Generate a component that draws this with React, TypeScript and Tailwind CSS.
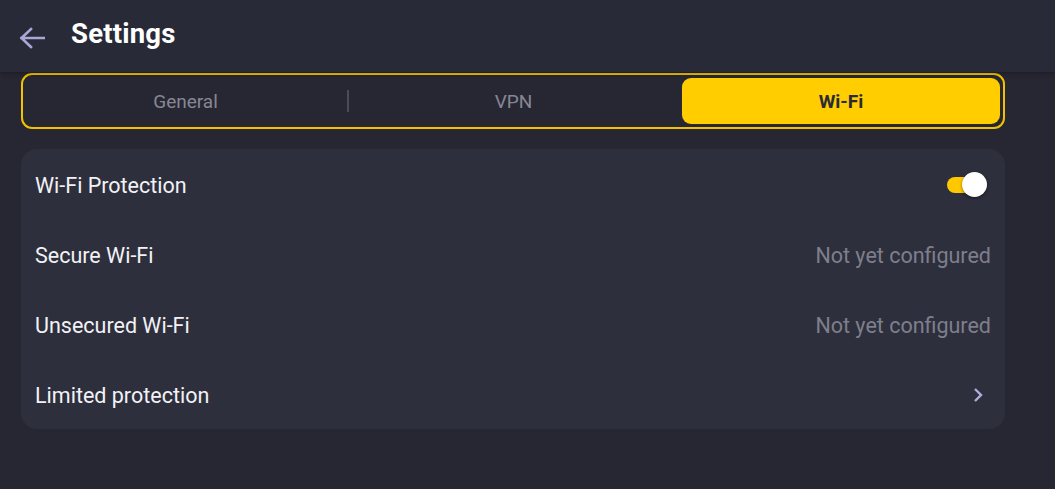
import React from "react";

export default function App() {
  const rows = [
    { label: "Wi-Fi Protection", kind: "toggle" },
    { label: "Secure Wi-Fi", kind: "text" },
    { label: "Unsecured Wi-Fi", kind: "text" },
    { label: "Limited protection", kind: "chevron" },
  ];
  return (
    <div
      className="w-[1055px] h-[489px] bg-[#262733] flex flex-col overflow-hidden"
      style={{ fontFamily: "Roboto, 'Noto Sans', sans-serif" }}
    >
      <div className="h-[72px] shrink-0 bg-[#292a37] flex items-center pl-[19px] shadow-[0_2px_4px_rgba(0,0,0,0.25)] relative z-10">
        <svg width="26" height="22" viewBox="0 0 26 22" fill="none" className="mt-[3px]">
          <path d="M12 2 L2.5 11 L12 20 M2.5 11 H25" stroke="#a9a7d6" strokeWidth="2.6" strokeLinecap="square" strokeLinejoin="miter" />
        </svg>
        <span className="ml-[26px] text-white text-[27.5px] font-bold tracking-[0.2px] -mt-[4px]">Settings</span>
      </div>
      <div className="px-[21px] pr-[50px] mt-[1px]">
        <div className="h-[56px] border-2 border-[#f2c200] rounded-[11px] flex items-stretch py-[3px] pr-[3px] pl-[1px]">
          <div className="w-[323px] flex items-center justify-center pt-[3px] text-[#868794] text-[19px]">General</div>
          <div className="w-[2px] bg-[#4a4b58] my-[12px]" />
          <div className="flex-1 flex items-center justify-center pt-[3px] text-[#868794] text-[19px]">VPN</div>
          <div className="ml-[4px] w-[318px] flex items-center justify-center pt-[3px] bg-[#ffcd00] rounded-[9px] text-[#2a2b36] text-[19px] font-bold shadow-[0_0_0_1px_#2a2b36]">
            Wi-Fi
          </div>
        </div>
        <div className="mt-[20px] bg-[#2e2f3c] rounded-[16px]">
          {rows.map((r) => (
            <div key={r.label} className="h-[70px] flex items-center pt-[4px] pl-[14px] pr-[14px]">
              <span className="text-[#f2f2f6] text-[21.5px] flex-1">{r.label}</span>
              {r.kind === "toggle" && (
                <div className="relative w-[40px] h-[26px] mr-[4px] -mt-[2px]">
                  <div className="absolute left-0 top-[5px] w-[34px] h-[16px] rounded-full bg-[#ffc800]" />
                  <div className="absolute left-[15px] top-0 w-[25px] h-[25px] rounded-full bg-white shadow-[0_1px_3px_rgba(0,0,0,0.5)]" />
                </div>
              )}
              {r.kind === "text" && (
                <span className="text-[#7e7f8c] text-[21.5px]">Not yet configured</span>
              )}
              {r.kind === "chevron" && (
                <svg width="12" height="16" viewBox="0 0 12 16" fill="none" className="mr-[7px] -mt-[2px]">
                  <path d="M3 2 L9 8 L3 14" stroke="#b0aedb" strokeWidth="2.4" />
                </svg>
              )}
            </div>
          ))}
        </div>
      </div>
    </div>
  );
}
